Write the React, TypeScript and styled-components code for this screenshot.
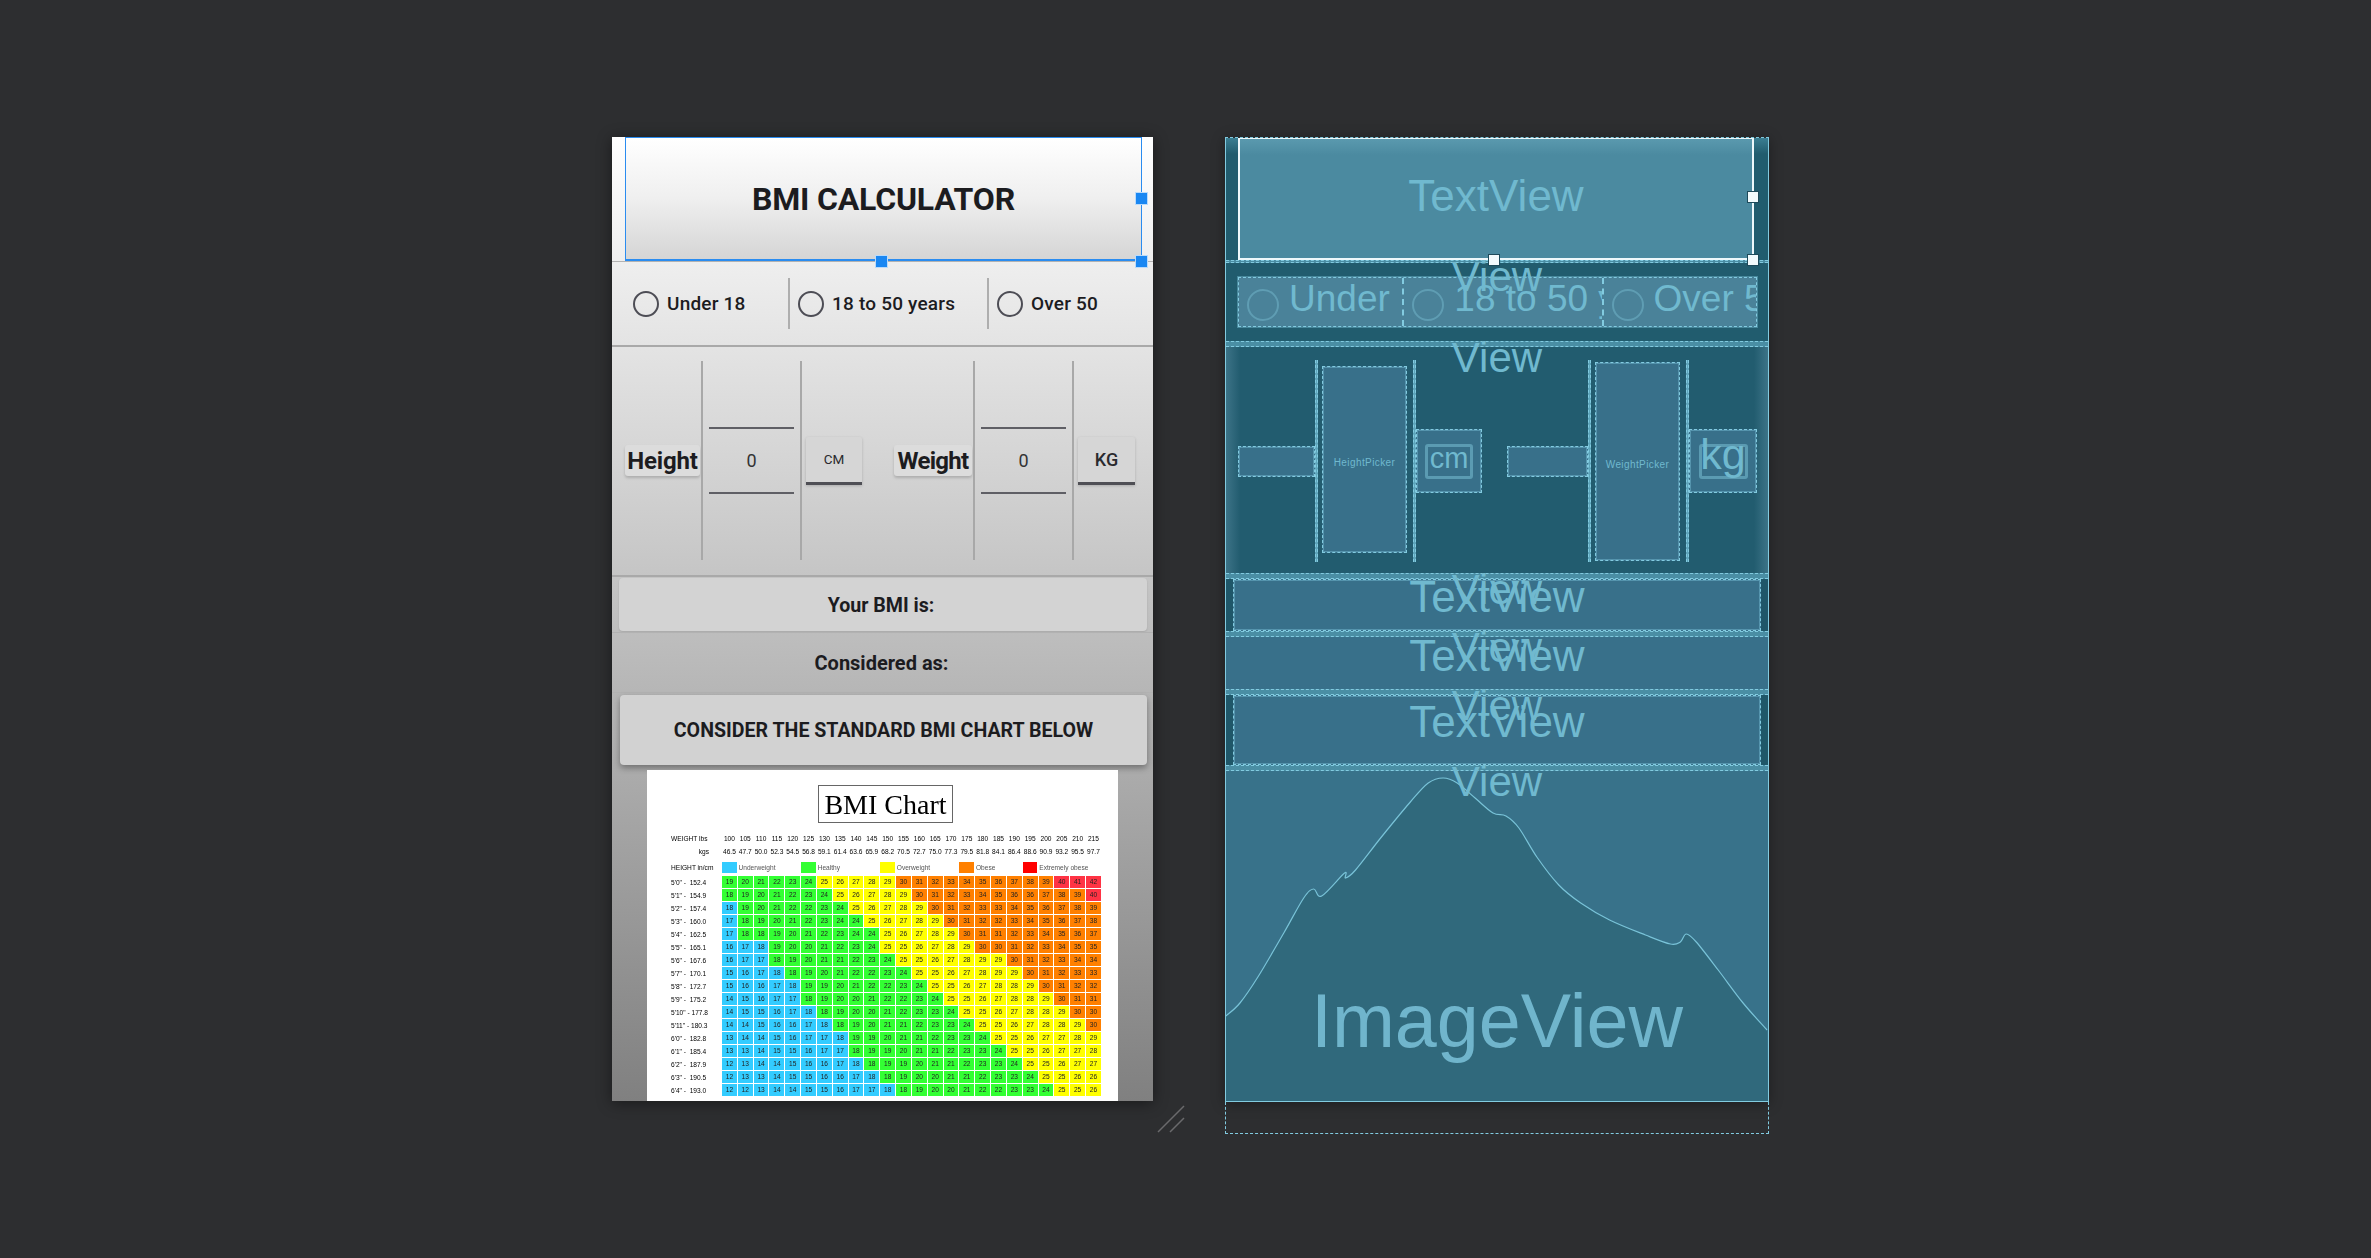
import React from 'react';
import styled, { createGlobalStyle } from 'styled-components';

const GlobalStyle = createGlobalStyle`
	html, body {
		margin: 0;
		padding: 0;
		background: #2d2e30;
	}
	* {
		box-sizing: border-box;
	}
`;

// chart data, one row per height
const chartRows: { label: string; blue: number; values: number[] }[] = [
	{ label: `5'0" -  152.4`, blue: 0, values: [19, 20, 21, 22, 23, 24, 25, 26, 27, 28, 29, 30, 31, 32, 33, 34, 35, 36, 37, 38, 39, 40, 41, 42] },
	{ label: `5'1" -  154.9`, blue: 0, values: [18, 19, 20, 21, 22, 23, 24, 25, 26, 27, 28, 29, 30, 31, 32, 33, 34, 35, 36, 36, 37, 38, 39, 40] },
	{ label: `5'2" -  157.4`, blue: 1, values: [18, 19, 20, 21, 22, 22, 23, 24, 25, 26, 27, 28, 29, 30, 31, 32, 33, 33, 34, 35, 36, 37, 38, 39] },
	{ label: `5'3" -  160.0`, blue: 1, values: [17, 18, 19, 20, 21, 22, 23, 24, 24, 25, 26, 27, 28, 29, 30, 31, 32, 32, 33, 34, 35, 36, 37, 38] },
	{ label: `5'4" -  162.5`, blue: 1, values: [17, 18, 18, 19, 20, 21, 22, 23, 24, 24, 25, 26, 27, 28, 29, 30, 31, 31, 32, 33, 34, 35, 36, 37] },
	{ label: `5'5" -  165.1`, blue: 3, values: [16, 17, 18, 19, 20, 20, 21, 22, 23, 24, 25, 25, 26, 27, 28, 29, 30, 30, 31, 32, 33, 34, 35, 35] },
	{ label: `5'6" -  167.6`, blue: 3, values: [16, 17, 17, 18, 19, 20, 21, 21, 22, 23, 24, 25, 25, 26, 27, 28, 29, 29, 30, 31, 32, 33, 34, 34] },
	{ label: `5'7" -  170.1`, blue: 4, values: [15, 16, 17, 18, 18, 19, 20, 21, 22, 22, 23, 24, 25, 25, 26, 27, 28, 29, 29, 30, 31, 32, 33, 33] },
	{ label: `5'8" -  172.7`, blue: 5, values: [15, 16, 16, 17, 18, 19, 19, 20, 21, 22, 22, 23, 24, 25, 25, 26, 27, 28, 28, 29, 30, 31, 32, 32] },
	{ label: `5'9" -  175.2`, blue: 5, values: [14, 15, 16, 17, 17, 18, 19, 20, 20, 21, 22, 22, 23, 24, 25, 25, 26, 27, 28, 28, 29, 30, 31, 31] },
	{ label: `5'10" - 177.8`, blue: 6, values: [14, 15, 15, 16, 17, 18, 18, 19, 20, 20, 21, 22, 23, 23, 24, 25, 25, 26, 27, 28, 28, 29, 30, 30] },
	{ label: `5'11" - 180.3`, blue: 7, values: [14, 14, 15, 16, 16, 17, 18, 18, 19, 20, 21, 21, 22, 23, 23, 24, 25, 25, 26, 27, 28, 28, 29, 30] },
	{ label: `6'0" -  182.8`, blue: 8, values: [13, 14, 14, 15, 16, 17, 17, 18, 19, 19, 20, 21, 21, 22, 23, 23, 24, 25, 25, 26, 27, 27, 28, 29] },
	{ label: `6'1" -  185.4`, blue: 8, values: [13, 13, 14, 15, 15, 16, 17, 17, 18, 19, 19, 20, 21, 21, 22, 23, 23, 24, 25, 25, 26, 27, 27, 28] },
	{ label: `6'2" -  187.9`, blue: 9, values: [12, 13, 14, 14, 15, 16, 16, 17, 18, 18, 19, 19, 20, 21, 21, 22, 23, 23, 24, 25, 25, 26, 27, 27] },
	{ label: `6'3" -  190.5`, blue: 10, values: [12, 13, 13, 14, 15, 15, 16, 16, 17, 18, 18, 19, 20, 20, 21, 21, 22, 23, 23, 24, 25, 25, 26, 26] },
	{ label: `6'4" -  193.0`, blue: 11, values: [12, 12, 13, 14, 14, 15, 15, 16, 17, 17, 18, 18, 19, 20, 20, 21, 22, 22, 23, 23, 24, 25, 25, 26] },
];

const lbs = [100, 105, 110, 115, 120, 125, 130, 135, 140, 145, 150, 155, 160, 165, 170, 175, 180, 185, 190, 195, 200, 205, 210, 215];
const kgs = ['46.5', '47.7', '50.0', '52.3', '54.5', '56.8', '59.1', '61.4', '63.6', '65.9', '68.2', '70.5', '72.7', '75.0', '77.3', '79.5', '81.8', '84.1', '86.4', '88.6', '90.9', '93.2', '95.5', '97.7'];

const legend = [
	{ name: 'Underweight', swatch: '#33ccff', span: 5 },
	{ name: 'Healthy', swatch: '#33ff33', span: 5 },
	{ name: 'Overweight', swatch: '#ffff00', span: 5 },
	{ name: 'Obese', swatch: '#ff8000', span: 4 },
	{ name: 'Extremely obese', swatch: '#ff0000', span: 5 },
];

const cellColor = (value: number, col: number, blue: number): string => {
	if (col < blue) return '#33ccff';
	if (value < 25) return '#33ff33';
	if (value < 30) return '#ffff00';
	if (value < 40) return '#ff8000';
	return '#ff3344';
};

// mountain outline of the vector drawable, panel coordinates
const peak: [number, number][] = [
	[0, 248], [14, 235], [32, 209], [58, 165], [78, 130], [88, 121], [96, 128], [119, 105], [120, 110], [130, 102], [156, 69], [185, 34], [203, 15], [218, 10], [232, 15], [250, 30], [268, 45], [281, 48], [294, 60], [312, 89], [334, 117], [356, 135], [385, 152], [421, 167], [446, 176], [456, 174], [462, 166], [472, 174], [494, 202], [519, 235], [543, 262],
];

const smooth = (pts: [number, number][]): string => {
	let d = `M${pts[0][0]} ${pts[0][1]}`;
	for (let i = 0; i < pts.length - 1; i++) {
		const p0 = pts[Math.max(i - 1, 0)];
		const p1 = pts[i];
		const p2 = pts[i + 1];
		const p3 = pts[Math.min(i + 2, pts.length - 1)];
		d += `C${p1[0] + (p2[0] - p0[0]) / 6} ${p1[1] + (p2[1] - p0[1]) / 6} ${p2[0] - (p3[0] - p1[0]) / 6} ${p2[1] - (p3[1] - p1[1]) / 6} ${p2[0]} ${p2[1]}`;
	}
	return d;
};

const App = () => {
	const outline = smooth(peak);
	return (
		<>
			<GlobalStyle />
			<Page>
				<Phone>
					<TitleBar>
						BMI CALCULATOR
						<Handle $right={-7} $top={54} />
						<Handle $right={253} $top={117} />
						<Handle $right={-7} $top={117} />
					</TitleBar>
					<Rule />
					<AgeRow>
						<AgeOption $width={163}>
							<Radio />
							Under 18
						</AgeOption>
						<AgeOption $width={199}>
							<Radio />
							18 to 50 years
						</AgeOption>
						<AgeOption $width={150}>
							<Radio />
							Over 50
						</AgeOption>
					</AgeRow>
					<Rule $thick />
					<PickerRow>
						<Field>
							<FieldLabel $width={75}>Height</FieldLabel>
							<Upright />
							<Picker>0</Picker>
							<Upright />
							<Unit $width={56}>CM</Unit>
						</Field>
						<Field>
							<FieldLabel $width={78} $tight>
								Weight
							</FieldLabel>
							<Upright />
							<Picker>0</Picker>
							<Upright />
							<Unit $width={57} $large>
								KG
							</Unit>
						</Field>
					</PickerRow>
					<Rule $thick />
					<ResultBand>
						<ResultCard>Your BMI is:</ResultCard>
					</ResultBand>
					<Rule />
					<PlainLine>Considered as:</PlainLine>
					<Rule />
					<NoteBand>
						<NoteCard>CONSIDER THE STANDARD BMI CHART BELOW</NoteCard>
					</NoteBand>
					<ChartImage>
						<Chart>
							<ChartTitle>BMI Chart</ChartTitle>
							<ChartHead $first>
								<span>WEIGHT lbs</span>
								{lbs.map((v) => (
									<HeadCell key={v}>{v}</HeadCell>
								))}
							</ChartHead>
							<ChartHead>
								<KgLabel>kgs</KgLabel>
								{kgs.map((v) => (
									<HeadCell key={v}>{v}</HeadCell>
								))}
							</ChartHead>
							<LegendRow>
								<span>HEIGHT in/cm</span>
								{legend.map((item) => (
									<LegendItem key={item.name} $span={item.span}>
										<Swatch $color={item.swatch} />
										{item.name}
									</LegendItem>
								))}
							</LegendRow>
							{chartRows.map((row) => (
								<ChartRow key={row.label}>
									<RowLabel>{row.label}</RowLabel>
									{row.values.map((v, i) => (
										<Cell key={i} $color={cellColor(v, i, row.blue)}>
											{v}
										</Cell>
									))}
								</ChartRow>
							))}
						</Chart>
					</ChartImage>
				</Phone>

				<ResizeGap>
					<svg width='28' height='28' viewBox='0 0 28 28'>
						<path d='M1 27 L27 1 M13 27 L27 13' stroke='#6a6a6c' strokeWidth='1.5' fill='none' />
					</svg>
				</ResizeGap>

				<BlueprintColumn>
					<Blueprint>
						<PrintHeader>
							<PrintTitle>
								TextView
								<PrintHandle $right={-7} $top={52} />
								<PrintHandle $right={252} $top={115} />
								<PrintHandle $right={-7} $top={115} />
							</PrintTitle>
						</PrintHeader>
						<PrintDivider>
							<ViewTag>View</ViewTag>
						</PrintDivider>
						<PrintAgeBand>
							<PrintAgeRow>
								<PrintAge $width={164}>
									<PrintRadio />
									Under 18
								</PrintAge>
								<PrintAge $width={200}>
									<PrintRadio />
									18 to 50 years
								</PrintAge>
								<PrintAge $width={155}>
									<PrintRadio />
									Over 50
								</PrintAge>
							</PrintAgeRow>
						</PrintAgeBand>
						<PrintDivider $double>
							<ViewTag>View</ViewTag>
						</PrintDivider>
						<PrintPickers>
							<PrintField>
								<PrintLabel $width={77} />
								<PrintUpright />
								<PrintPicker $top={6} $bottom={9} $pad={90}>
									HeightPicker
								</PrintPicker>
								<PrintUpright />
								<PrintUnit $width={66}>
									<PrintUnitText>cm</PrintUnitText>
								</PrintUnit>
							</PrintField>
							<PrintField>
								<PrintLabel $width={81} />
								<PrintUpright />
								<PrintPicker $top={2} $bottom={1} $pad={96}>
									WeightPicker
								</PrintPicker>
								<PrintUpright />
								<PrintUnit $width={68}>
									<PrintUnitText $large>kg</PrintUnitText>
								</PrintUnit>
							</PrintField>
						</PrintPickers>
						<PrintDivider $double>
							<ViewTag>View</ViewTag>
						</PrintDivider>
						<PrintBand $height={52}>
							<PrintCard>TextView</PrintCard>
						</PrintBand>
						<PrintDivider $double>
							<ViewTag>View</ViewTag>
						</PrintDivider>
						<PrintFull>TextView</PrintFull>
						<PrintDivider $double>
							<ViewTag>View</ViewTag>
						</PrintDivider>
						<PrintBand $height={70}>
							<PrintCard>TextView</PrintCard>
						</PrintBand>
						<PrintDivider $double>
							<ViewTag>View</ViewTag>
						</PrintDivider>
						<PrintImage>
							<MountainSvg viewBox='0 3 544 330' preserveAspectRatio='none'>
								<path d={`${outline} L544 333 L0 333 Z`} fill='#30697c' />
								<path d={outline} fill='none' stroke='#79c3d8' strokeWidth='1.2' />
							</MountainSvg>
							<ImageLabel>ImageView</ImageLabel>
						</PrintImage>
					</Blueprint>
					<Overflow />
				</BlueprintColumn>
			</Page>
		</>
	);
};

const Page = styled.div`
	width: 2371px;
	height: 1258px;
	padding: 137px 0 0 612px;
	display: flex;
	align-items: flex-start;
	overflow: hidden;
	font-family: Roboto, 'Liberation Sans', sans-serif;
`;

const Phone = styled.div`
	width: 541px;
	height: 964px;
	display: flex;
	flex-direction: column;
	background: linear-gradient(180deg, #ffffff 0%, #808080 100%);
	box-shadow: 0 2px 14px rgba(0, 0, 0, 0.45);
	color: #1c1c1f;
`;

const TitleBar = styled.div`
	position: relative;
	width: 517px;
	height: 124px;
	margin-left: 13px;
	padding-top: 1px;
	flex-shrink: 0;

	display: flex;
	align-items: center;
	justify-content: center;

	background: linear-gradient(180deg, #ffffff 0%, #efefef 50%, #d5d5d5 100%);
	border: 2px solid #2a8cf0;
	border-top-width: 1px;
	border-right-width: 1px;
	border-left-width: 1px;

	font-size: 32px;
	font-weight: 700;
	letter-spacing: -0.2px;
`;

const Handle = styled.span<{ $right: number; $top: number }>`
	position: absolute;
	right: ${(p) => p.$right}px;
	top: ${(p) => p.$top}px;
	width: 13px;
	height: 13px;
	background: #1a87f2;
	border: 1px solid rgba(255, 255, 255, 0.7);
`;

const Rule = styled.div<{ $thick?: boolean }>`
	height: ${(p) => (p.$thick ? 2 : 1)}px;
	flex-shrink: 0;
	background: ${(p) => (p.$thick ? '#a9a9a9' : '#b2b2b2')};
`;

const AgeRow = styled.div`
	height: 83px;
	flex-shrink: 0;
	padding: 16px 0 0 13px;
	display: flex;
	align-items: flex-start;
`;

const AgeOption = styled.div<{ $width: number }>`
	width: ${(p) => p.$width}px;
	height: 51px;
	padding-left: 8px;
	display: flex;
	align-items: center;
	gap: 8px;

	font-size: 19px;
	font-weight: 500;
	letter-spacing: 0.2px;
	white-space: nowrap;

	& + & {
		border-left: 2px solid #aeaeae;
	}
`;

const Radio = styled.span`
	width: 26px;
	height: 26px;
	flex-shrink: 0;
	border: 2.5px solid #4d4d55;
	border-radius: 50%;
`;

const PickerRow = styled.div`
	height: 228px;
	flex-shrink: 0;
	padding: 14px 0 15px 13px;
	display: flex;
	gap: 32px;
`;

const Field = styled.div`
	display: flex;
	align-items: center;
`;

const FieldLabel = styled.div<{ $width: number; $tight?: boolean }>`
	width: ${(p) => p.$width}px;
	height: 31px;
	margin-right: 1px;

	display: flex;
	align-items: center;
	justify-content: center;

	background: #dcdcdc;
	border-radius: 3px;
	box-shadow: 0 2px 3px rgba(0, 0, 0, 0.18);

	font-size: 24px;
	font-weight: 700;
	letter-spacing: ${(p) => (p.$tight ? -0.7 : -0.2)}px;
`;

const Upright = styled.div`
	width: 2px;
	align-self: stretch;
	background: #a8a8a8;
`;

const Picker = styled.div`
	width: 85px;
	height: 67px;
	margin: 0 6px;

	display: flex;
	align-items: center;
	justify-content: center;

	border-top: 2px solid #5f5f65;
	border-bottom: 2px solid #5f5f65;

	color: #333;
	font-size: 18px;
`;

const Unit = styled.div<{ $width: number; $large?: boolean }>`
	width: ${(p) => p.$width}px;
	height: 48px;
	margin-left: 4px;

	display: flex;
	align-items: center;
	justify-content: center;

	background: #d6d6d6;
	border-bottom: 3px solid #4f4f55;
	border-radius: 2px 2px 0 0;
	box-shadow: 0 1px 3px rgba(0, 0, 0, 0.18);

	color: #2a2a2e;
	font-size: ${(p) => (p.$large ? 18 : 13.5)}px;
	font-weight: ${(p) => (p.$large ? 500 : 400)};
`;

const ResultBand = styled.div`
	height: 55px;
	flex-shrink: 0;
	padding: 1px 6px 1px 7px;
	display: flex;
`;

const ResultCard = styled.div`
	width: 100%;
	padding: 2px 4px 0 0;

	display: flex;
	align-items: center;
	justify-content: center;

	background: #d3d3d3;
	border-radius: 4px;
	box-shadow: 0 1px 2px rgba(0, 0, 0, 0.12);

	font-size: 19.6px;
	font-weight: 700;
`;

const PlainLine = styled.div`
	height: 59px;
	flex-shrink: 0;
	padding-right: 2px;

	display: flex;
	align-items: center;
	justify-content: center;

	font-size: 20px;
	font-weight: 700;
`;

const NoteBand = styled.div`
	height: 77px;
	flex-shrink: 0;
	padding: 2px 6px 5px 8px;
	display: flex;
`;

const NoteCard = styled.div`
	width: 100%;

	display: flex;
	align-items: center;
	justify-content: center;

	background: #d2d2d2;
	border-radius: 4px;
	box-shadow: 0 3px 6px rgba(0, 0, 0, 0.35);

	font-size: 19.6px;
	font-weight: 700;
`;

const ChartImage = styled.div`
	width: 471px;
	height: 331px;
	margin-left: 35px;
	flex-shrink: 0;
	overflow: hidden;
	background: #fff;
`;

const Chart = styled.div`
	padding: 15px 0 0 24px;
	color: #000;
	font-family: 'Liberation Sans', Arial, sans-serif;
	font-size: 6.6px;
	filter: blur(0.25px);
`;

const ChartTitle = styled.div`
	width: 135px;
	height: 38px;
	margin-left: 147px;
	padding-top: 2px;

	display: flex;
	align-items: center;
	justify-content: center;

	border: 1px solid #666;

	color: #000;
	font-family: 'Liberation Serif', 'Times New Roman', serif;
	font-size: 28px;
`;

const chartGrid = `
	display: grid;
	grid-template-columns: 51px repeat(24, 15.83px);
	align-items: center;
	white-space: nowrap;
`;

const ChartHead = styled.div<{ $first?: boolean }>`
	${chartGrid}
	height: 12.7px;
	margin-top: ${(p) => (p.$first ? 9 : 0)}px;
`;

const HeadCell = styled.span`
	margin-right: 1px;
	text-align: center;
`;

const KgLabel = styled.span`
	padding-right: 13px;
	text-align: right;
`;

const LegendRow = styled.div`
	${chartGrid}
	height: 11px;
	margin: 5px 0 2.6px;
`;

const LegendItem = styled.span<{ $span: number }>`
	grid-column: span ${(p) => p.$span};
	display: flex;
	align-items: center;
	gap: 2px;
	color: #555;
`;

const Swatch = styled.i<{ $color: string }>`
	width: 14.5px;
	height: 11px;
	background: ${(p) => p.$color};
`;

const ChartRow = styled.div`
	${chartGrid}
	height: 13px;
`;

const RowLabel = styled.span`
	white-space: pre;
`;

const Cell = styled.span<{ $color: string }>`
	height: 12px;
	margin-right: 1px;
	line-height: 12px;
	text-align: center;
	color: #222;
	background: ${(p) => p.$color};
`;

const ResizeGap = styled.div`
	width: 72px;
	height: 997px;
	padding: 0 0 1px 4px;
	display: flex;
	align-items: flex-end;
`;

// blueprint side
const blueLine = '#82cbe0';
const lineFill = 'rgba(130, 203, 224, 0.4)';
const blueText = '#70b9cf';

const BlueprintColumn = styled.div`
	width: 544px;
	display: flex;
	flex-direction: column;
`;

const Blueprint = styled.div`
	height: 965px;
	display: flex;
	flex-direction: column;
	border-left: 1px solid ${blueLine};
	border-right: 1px solid ${blueLine};
	border-top: 1px dashed ${blueLine};
	border-bottom: 1px solid ${blueLine};
	box-shadow: 0 2px 12px rgba(0, 0, 0, 0.35);

	color: ${blueText};
	font-family: 'Liberation Sans', Arial, sans-serif;
`;

const Overflow = styled.div`
	height: 32px;
	border: 1px dashed ${blueLine};
	border-top: 0;
`;

const PrintHeader = styled.div`
	position: relative;
	z-index: 2;
	height: 122px;
	flex-shrink: 0;
	padding: 0 14px 0 12px;
	display: flex;
	background: linear-gradient(180deg, #3b7e92 0, #215c6e 16px);
`;

const PrintTitle = styled.div`
	position: relative;
	width: 100%;

	display: flex;
	align-items: center;
	justify-content: center;
	padding-bottom: 5px;

	background: linear-gradient(180deg, #5a99ae 0, #4b8aa0 16px);
	border: 2px solid #eef8fb;
	border-top-width: 1px;

	font-size: 44px;
`;

const PrintHandle = styled.span<{ $right: number; $top: number }>`
	position: absolute;
	right: ${(p) => p.$right}px;
	top: ${(p) => p.$top}px;
	width: 12px;
	height: 12px;
	background: #f2fbfd;
	border: 1px solid #1d4a5a;
`;

const PrintDivider = styled.div<{ $double?: boolean }>`
	position: relative;
	z-index: 1;
	height: ${(p) => (p.$double ? 6 : 3)}px;
	flex-shrink: 0;
	background: #4a8ea4;
	border-top: 1px dashed ${blueLine};
	border-bottom: 1px dashed ${blueLine};
`;

const ViewTag = styled.span`
	position: absolute;
	left: 0;
	right: 0;
	top: -8px;
	text-align: center;
	font-size: 42px;
	line-height: 48px;
`;

const PrintAgeBand = styled.div`
	height: 78px;
	flex-shrink: 0;
	padding: 14px 11px 0 12px;
	background: #215c6e;
`;

const PrintAgeRow = styled.div`
	height: 50px;
	display: flex;
	border: 1px dashed ${blueLine};
	box-shadow: 0 0 0 1px ${lineFill};
	background: #4a8299;
`;

const PrintAge = styled.div<{ $width: number }>`
	width: ${(p) => p.$width}px;
	padding: 0 0 6px 8px;
	overflow: hidden;
	display: flex;
	align-items: center;
	gap: 10px;

	font-size: 37px;
	white-space: nowrap;

	& + & {
		border-left: 2px dashed ${blueLine};
	}
`;

const PrintRadio = styled.span`
	width: 32px;
	height: 32px;
	margin-top: 12px;
	flex-shrink: 0;
	border: 2.5px solid #5f9db3;
	border-radius: 50%;
`;

const PrintPickers = styled.div`
	height: 226px;
	flex-shrink: 0;
	padding: 13px 0 11px 12px;
	display: flex;
	gap: 25px;
	background: linear-gradient(90deg, #3c7387 0, #225c6f 14px, #225c6f calc(100% - 14px), #3c7387 100%);
`;

const PrintField = styled.div`
	display: flex;
	align-items: center;
`;

const PrintLabel = styled.div<{ $width: number }>`
	width: ${(p) => p.$width}px;
	height: 31px;
	background: #38708a;
	border: 1px dashed ${blueLine};
	box-shadow: inset 0 0 0 1px ${lineFill};
`;

const PrintUpright = styled.div`
	width: 3px;
	align-self: stretch;
	background: #5ea5bb;
	border-left: 1px dashed ${blueLine};
	border-right: 1px dashed ${blueLine};
`;

const PrintPicker = styled.div<{ $top: number; $bottom: number; $pad: number }>`
	width: 85px;
	align-self: stretch;
	margin: ${(p) => p.$top}px 6px ${(p) => p.$bottom}px 4px;
	padding-top: ${(p) => p.$pad}px;
	background: #38708a;
	border: 1px dashed ${blueLine};
	box-shadow: inset 0 0 0 1px ${lineFill};
	font-size: 10px;
	letter-spacing: 0.4px;
	text-align: center;
`;

const PrintUnit = styled.div<{ $width: number }>`
	width: ${(p) => p.$width}px;
	height: 64px;
	display: flex;
	align-items: center;
	justify-content: center;
	background: #38708a;
	border: 1px dashed ${blueLine};
	box-shadow: inset 0 0 0 1px ${lineFill};
`;

const PrintUnitText = styled.span<{ $large?: boolean }>`
	width: ${(p) => (p.$large ? 49 : 48)}px;
	height: 35px;

	display: flex;
	align-items: center;
	justify-content: center;

	border: 3px solid #5b9bb2;
	border-radius: 3px;

	font-size: ${(p) => (p.$large ? 43 : 29)}px;
	line-height: 30px;
	padding-bottom: ${(p) => (p.$large ? 14 : 6)}px;
`;

const PrintBand = styled.div<{ $height: number }>`
	height: ${(p) => p.$height}px;
	flex-shrink: 0;
	padding: 0 7px;
	display: flex;
	background: #1f5769;
`;

const PrintCard = styled.div`
	width: 100%;
	display: flex;
	align-items: center;
	justify-content: center;
	padding-bottom: 16px;
	background: #38708a;
	border: 1px dashed ${blueLine};
	box-shadow: inset 0 0 0 1px ${lineFill};
	font-size: 44px;
`;

const PrintFull = styled.div`
	height: 52px;
	flex-shrink: 0;
	display: flex;
	align-items: center;
	justify-content: center;
	padding-bottom: 14px;
	background: #38708a;
	font-size: 44px;
`;

const PrintImage = styled.div`
	position: relative;
	flex: 1;
	overflow: hidden;
	display: flex;
	align-items: flex-end;
	justify-content: center;
	background: #38728a;
`;

const MountainSvg = styled.svg`
	position: absolute;
	inset: 0;
	width: 100%;
	height: 100%;
`;

const ImageLabel = styled.div`
	position: relative;
	margin-bottom: 37px;
	font-size: 75.5px;
	line-height: 86px;
	color: #70b5cc;
`;

export default App;
